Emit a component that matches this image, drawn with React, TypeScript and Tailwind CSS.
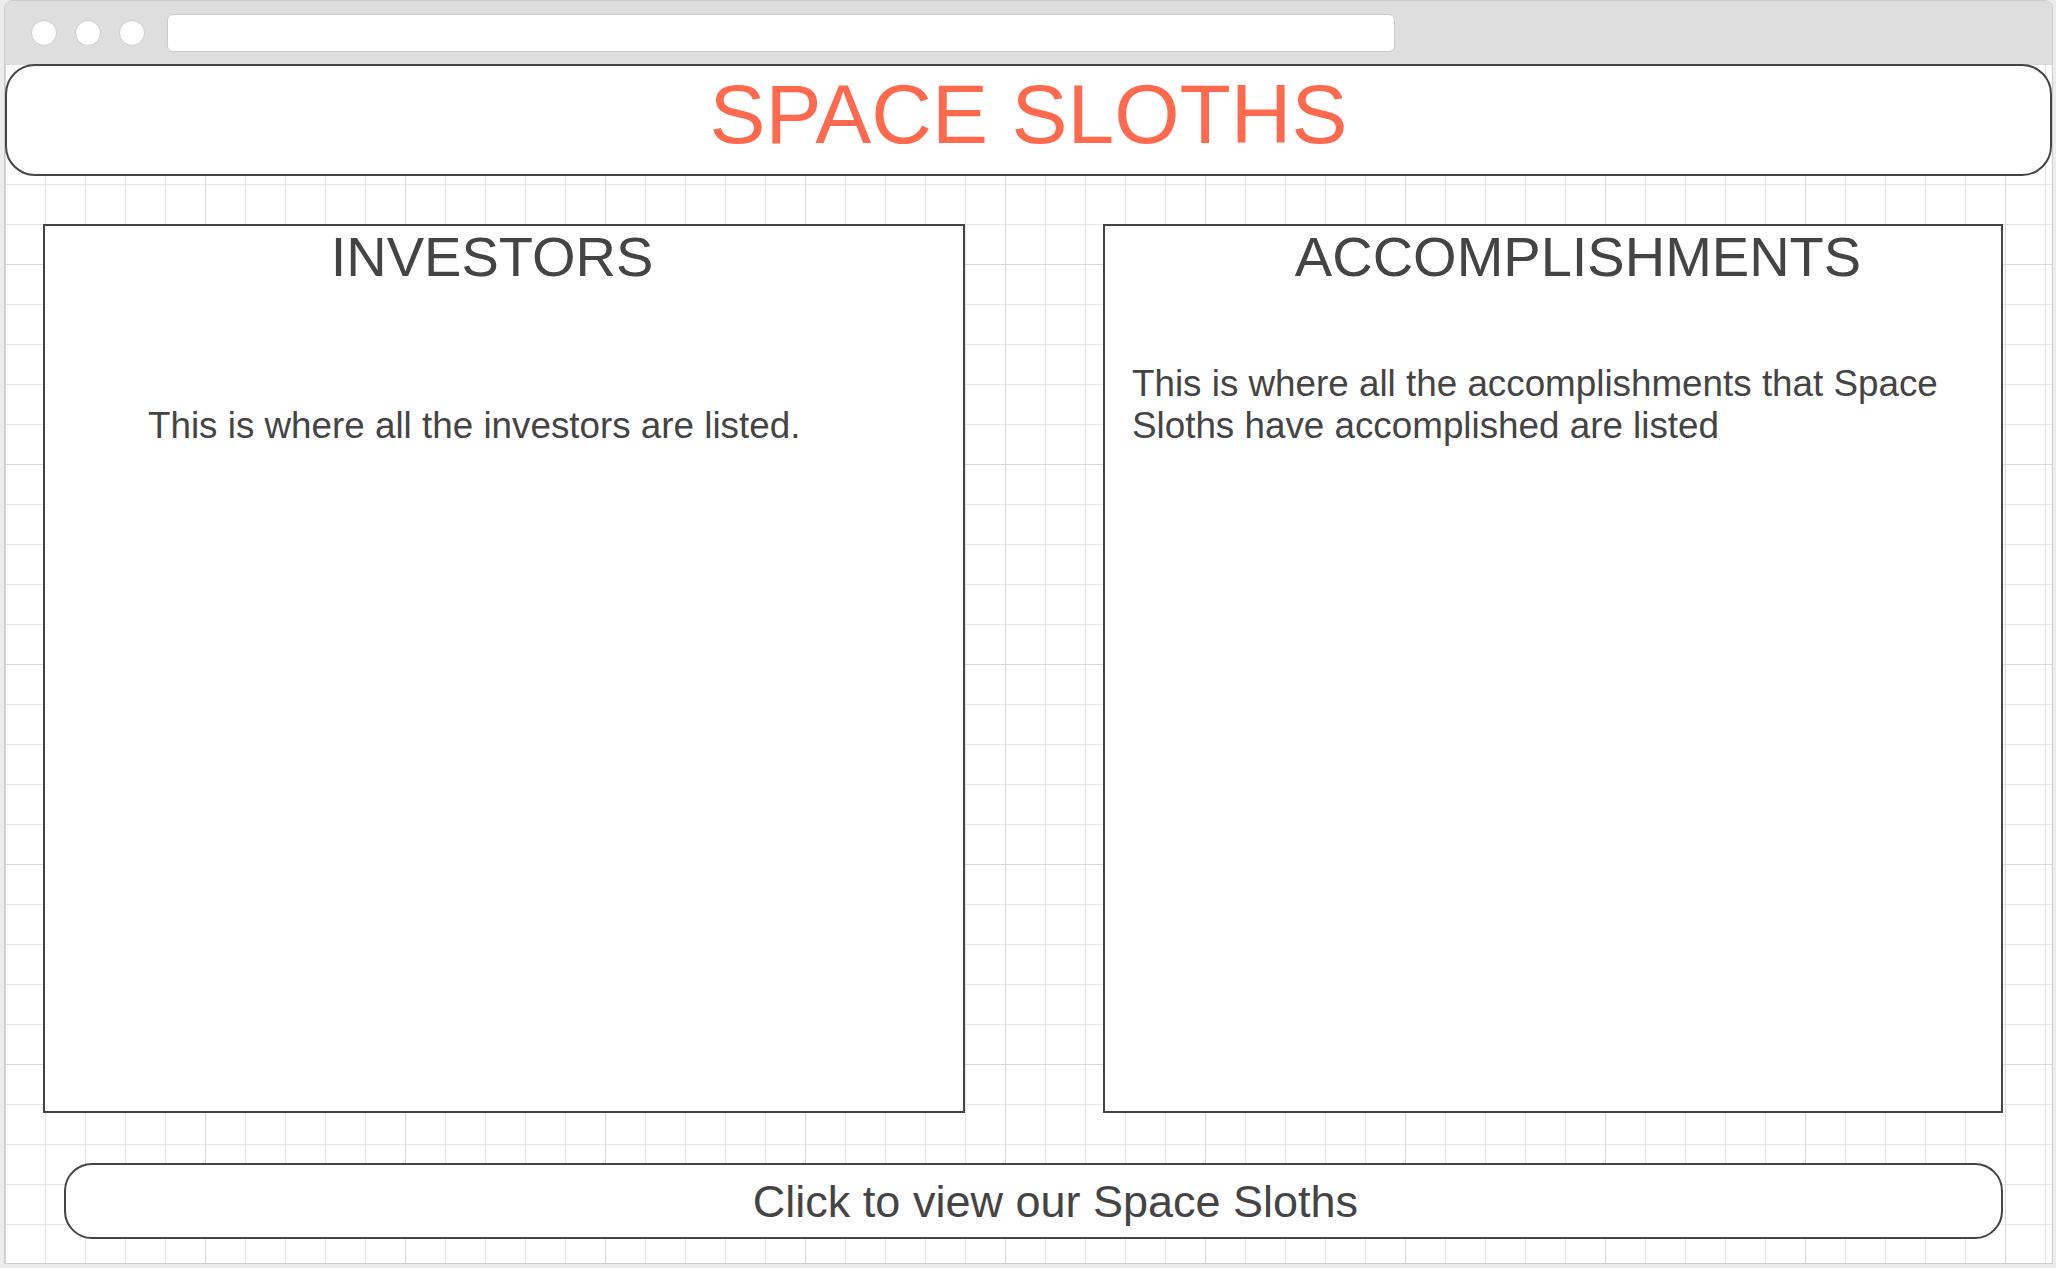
import React from "react";

const Panel = ({ title, titleClass, children }: { title: string; titleClass: string; children: React.ReactNode }) => (
  <div className="h-[889px] border-2 border-[#444444] bg-white flex flex-col">
    <h2 className={`pt-[3px] text-center text-[56px] leading-none text-[#444444] ${titleClass}`}>{title}</h2>
    {children}
  </div>
);

export default function App() {
  return (
    <div className="w-[2056px] h-[1268px] bg-[#ececec] pl-[4px] overflow-hidden font-['Liberation_Sans',Arial,sans-serif]">
      <div className="w-[2049px] h-[1264px] border border-[#cccccc] rounded-t-[8px] bg-white flex flex-col overflow-hidden">
        {/* browser chrome */}
        <div className="h-[63px] shrink-0 bg-[#dedede] flex items-center">
          <div className="ml-[26px] flex gap-[18px]">
            <span className="w-[26px] h-[26px] rounded-full bg-white border border-[#cccccc]" />
            <span className="w-[26px] h-[26px] rounded-full bg-white border border-[#cccccc]" />
            <span className="w-[26px] h-[26px] rounded-full bg-white border border-[#cccccc]" />
          </div>
          <div className="ml-[22px] w-[1228px] h-[38px] rounded-[6px] bg-white border border-[#cccccc]" />
        </div>

        {/* page canvas */}
        <div className="flex-1 flex flex-col bg-[linear-gradient(to_right,#d9d9d9_1px,transparent_1px),linear-gradient(to_bottom,#d9d9d9_1px,transparent_1px),linear-gradient(to_right,#e6e6e6_1px,transparent_1px),linear-gradient(to_bottom,#e6e6e6_1px,transparent_1px)] bg-[size:200px_200px,200px_200px,40px_40px,40px_40px]">
          <header className="h-[112px] shrink-0 rounded-[30px] border-2 border-[#444444] bg-white flex items-center justify-center pb-[12px]">
            <h1 className="text-[84px] leading-none text-[#ff6a4f]">SPACE SLOTHS</h1>
          </header>

          <div className="mt-[48px] pl-[38px] flex gap-[138px]">
            <div className="w-[922px]">
              <Panel title="INVESTORS" titleClass="pr-[24px]">
                <p className="mt-[120px] pl-[103px] text-[36.8px] leading-[42px] text-[#444444]">
                  This is where all the investors are listed.
                </p>
              </Panel>
            </div>
            <div className="w-[900px]">
              <Panel title="ACCOMPLISHMENTS" titleClass="pl-[50px]">
                <p className="mt-[78px] ml-[27px] w-[850px] text-[36.8px] leading-[42px] text-[#444444]">
                  This is where all the accomplishments that Space Sloths have accomplished are listed
                </p>
              </Panel>
            </div>
          </div>

          <button className="mt-[50px] ml-[59px] w-[1939px] h-[76px] shrink-0 rounded-[28px] border-2 border-[#444444] bg-white flex items-center justify-center pl-[44px] text-[45px] leading-none text-[#444444]">
            Click to view our Space Sloths
          </button>
        </div>
      </div>
    </div>
  );
}
